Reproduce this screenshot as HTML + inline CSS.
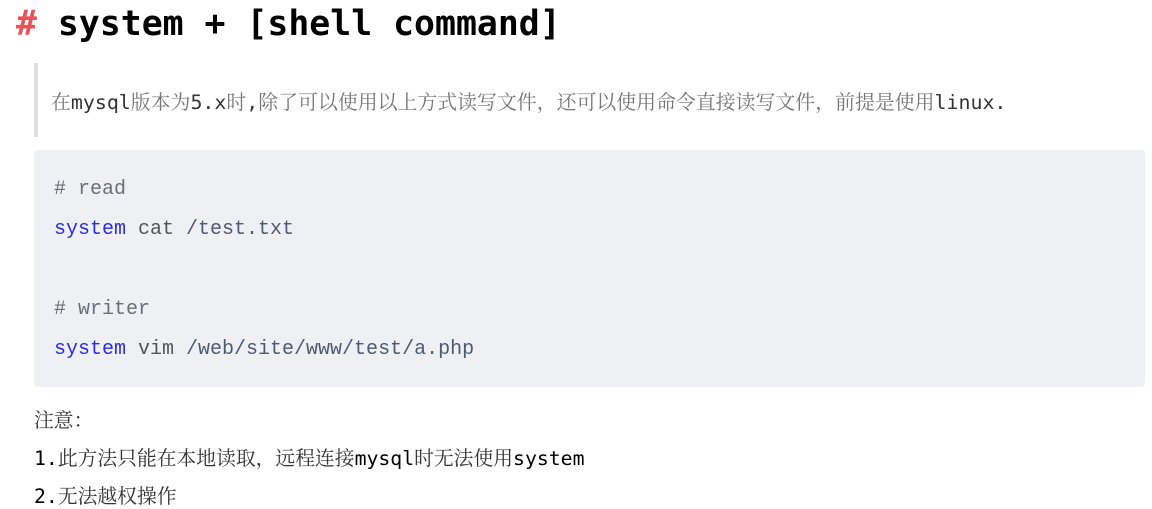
<!DOCTYPE html>
<html><head><meta charset="utf-8"><style>
body{margin:0;background:#fff;width:1152px;height:508px;overflow:hidden;font-family:"Liberation Sans","Noto Sans CJK SC",sans-serif;}
.h{position:absolute;left:16px;top:4px;font:bold 34.8px "DejaVu Sans Mono",monospace;color:#000;white-space:nowrap;}
.h span{color:#e8525a}
.bq{position:absolute;left:34px;top:63px;width:4px;height:74px;background:#e0e0e0}
.bqt{position:absolute;left:51px;top:86px;font-size:19.9px;color:#777;white-space:nowrap;font-family:"Noto Serif CJK SC","Noto Sans CJK SC",serif;}
.m{font-family:"DejaVu Sans Mono",monospace;color:#333;}
.code{position:absolute;left:34px;top:150px;width:1111px;height:237px;background:#eef0f4;border-radius:4px}
.cl{position:absolute;left:54px;font:20px "Liberation Mono",monospace;color:#555;white-space:nowrap}
.k{color:#2c2ce0}.p{color:#4d5a70}.c{color:#6a6f78}
.n{position:absolute;left:34px;font-size:19.8px;color:#333;white-space:nowrap;font-family:"Noto Serif CJK SC","Noto Sans CJK SC",serif;}
.n .m{color:#000}
</style></head><body>
<div class="h"><span>#</span> system + [shell command]</div>
<div class="bq"></div>
<div class="bqt">在<span class="m">mysql</span>版本为<span class="m">5.x</span>时<span class="m">,</span>除了可以使用以上方式读写文件，还可以使用命令直接读写文件，前提是使用<span class="m">linux.</span></div>
<div class="code"></div>
<div class="cl c" style="top:178px"># read</div>
<div class="cl" style="top:218px"><span class="k">system</span> cat <span class="p">/test.txt</span></div>
<div class="cl c" style="top:298px"># writer</div>
<div class="cl" style="top:338px"><span class="k">system</span> vim <span class="p">/web/site/www/test/a.php</span></div>
<div class="n" style="top:404px">注意：</div>
<div class="n" style="top:442px"><span class="m">1.</span>此方法只能在本地读取，远程连接<span class="m">mysql</span>时无法使用<span class="m">system</span></div>
<div class="n" style="top:480px"><span class="m">2.</span>无法越权操作</div>
</body></html>
